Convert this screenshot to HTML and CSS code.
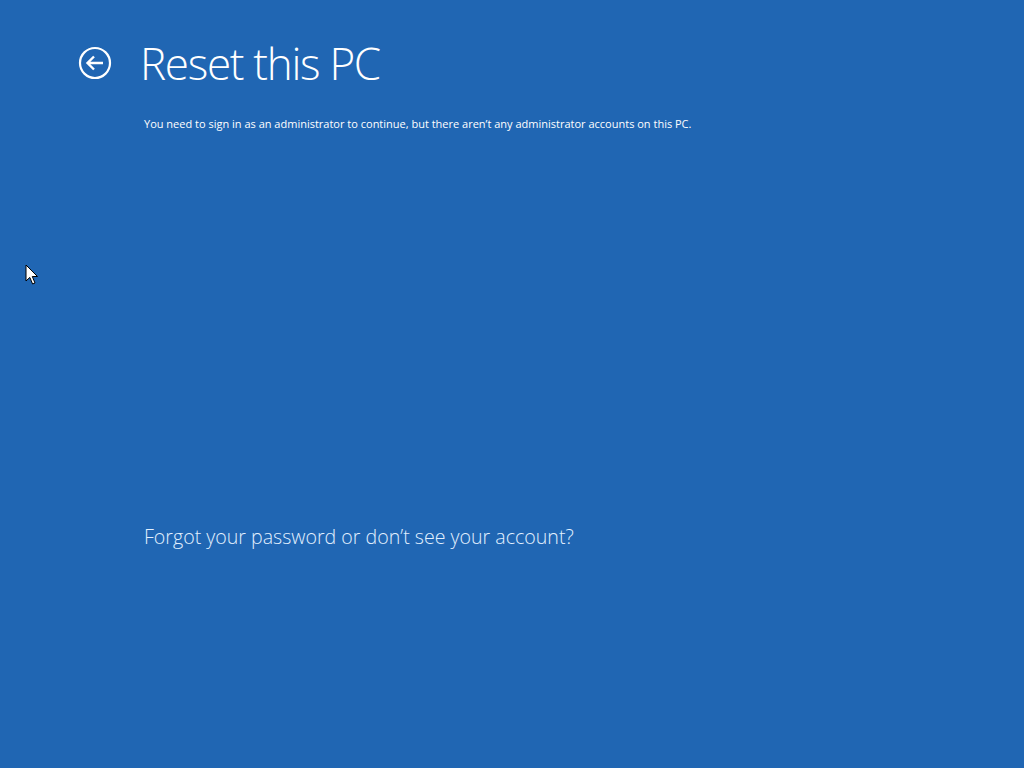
FILE: index.html
```html
<!DOCTYPE html>
<html lang="en">
<head>
  <meta charset="UTF-8">
  <title>Reset this PC</title>
  <link rel="stylesheet" href="styles.css">
</head>
<body>

  <div class="screen">

    <header class="title-bar">
      <a href="#" class="back-button" aria-label="Back">
        <svg width="34" height="34" viewBox="0 0 34 34">
          <circle cx="17" cy="17" r="15" fill="none" stroke="#fff" stroke-width="2.2"/>
          <path d="M25 17H10M16 10.5L9.5 17L16 23.5" fill="none" stroke="#fff" stroke-width="2.4"/>
        </svg>
      </a>
      <h1>Reset this PC</h1>
    </header>

    <main class="content">
      <p class="message">You need to sign in as an administrator to continue, but there aren’t any administrator accounts on this PC.</p>
      <a href="#" class="help-link">Forgot your password or don’t see your account?</a>
    </main>

  </div>

  <!-- mouse pointer -->
  <svg class="pointer" width="14" height="22" viewBox="0 0 14 22">
    <path d="M1 1V17L4.8 13.4L7.6 20L10 19L7.3 12.5H12.5Z" fill="#fff" stroke="#000" stroke-width="1"/>
  </svg>

</body>
</html>
```

FILE: styles.css
```css
* {

  box-sizing: border-box;
  margin: 0;
  padding: 0;

}

html,
body {

  height: 100%;

}

body {

  background-color: #2066b3;
  font-family: 'Open Sans', 'Noto Sans', sans-serif;
  color: #fff;
  overflow: hidden;

}

.screen {

  padding: 34px 0 0 78px;

}

.title-bar {

  display: flex;
  align-items: center;
  gap: 28px;

}

.back-button {

  display: flex;
  width: 34px;
  height: 34px;

}

.title-bar h1 {

  font-size: 44px;
  font-weight: 300;
  line-height: 58px;
  letter-spacing: -1.3px;

}

.content {

  padding-left: 66px;

}

.message {

  margin-top: 24px;
  font-size: 11px;
  line-height: 16px;

}

.help-link {

  display: inline-block;
  margin-top: 392px;
  font-size: 19.6px;
  font-weight: 300;
  line-height: 26px;
  color: #e2f0ff;
  text-decoration: none;

}

.pointer {

  position: absolute;
  left: 25px;
  top: 264px;

}
```
